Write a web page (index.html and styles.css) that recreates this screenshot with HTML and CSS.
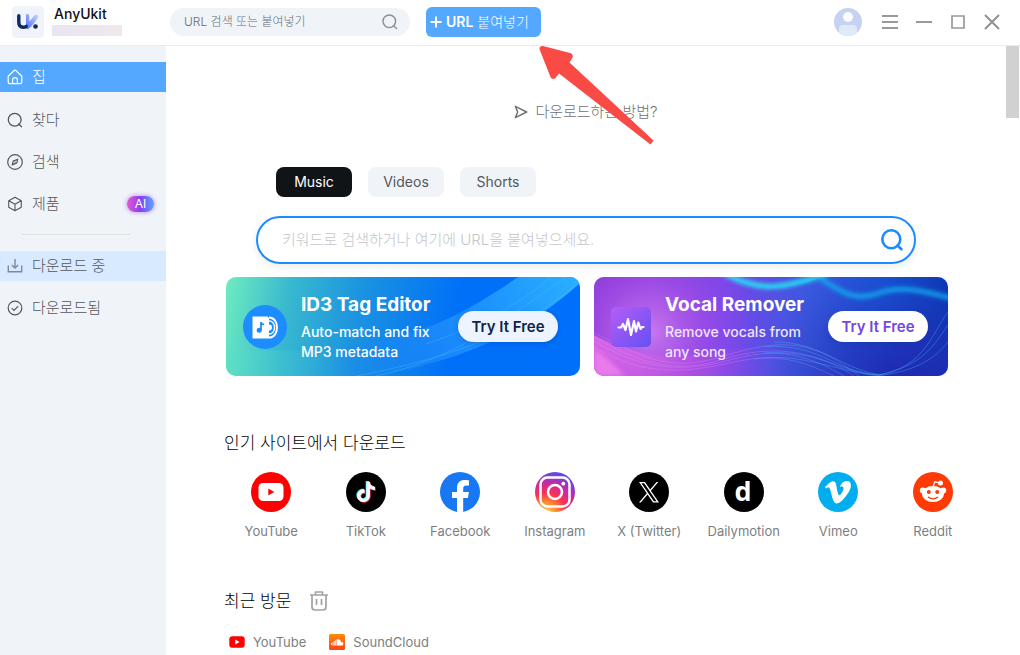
FILE: index.html
```html
<!DOCTYPE html>
<html lang="ko">
<head>
<meta charset="utf-8">
<meta name="viewport" content="width=device-width, initial-scale=1">
<title>AnyUkit</title>
<link rel="stylesheet" href="styles.css">
</head>
<body>
<header class="topbar">
  <div class="brand">
    <svg class="brand-logo" viewBox="0 0 32 32" aria-hidden="true">
      <defs><linearGradient id="lg" x1="0" y1="1" x2="1" y2="0"><stop offset="0" stop-color="#5a6cf8"/><stop offset=".5" stop-color="#8da2fb"/><stop offset="1" stop-color="#cbdcff"/></linearGradient></defs>
      <rect width="32" height="32" rx="4" fill="#f0f4fa"/>
      <path d="M14 8.500c1.500-1 3.400 0 3.400 1.500v5.500l5.200-6.200c1.800-2 4.800.2 3.300 2.500-2.500 4-5.500 8.200-9.400 11-1.200.8-2.500.2-2.500-1.200z" fill="url(#lg)"/>
      <path d="M6.800 9.800v6.500c0 3.200 1.700 5 4.500 5 1.200 0 2.100-.3 3-.9" stroke="#0d2c5e" stroke-width="3.400" fill="none" stroke-linecap="round"/>
      <circle cx="23.500" cy="20.500" r="2.300" fill="#0d2c5e"/>
    </svg>
    <div class="brand-text">
      <span class="brand-name">AnyUkit</span>
      <span class="brand-account"></span>
    </div>
  </div>
  <form class="quick-search">
    <input type="text" aria-label="URL 검색" placeholder="URL 검색 또는 붙여넣기">
    <button type="button" class="plain" aria-label="검색">
      <svg width="16" height="16" viewBox="0 0 16 16" fill="none" stroke="#8b8e92" stroke-width="1.400"><circle cx="7.300" cy="7.300" r="6.300"/><path d="M11.600 11.800l3 2.700" stroke-linecap="round"/></svg>
    </button>
  </form>
  <button type="button" class="paste-btn">
    <svg width="12" height="12" viewBox="0 0 12 12" stroke="#fff" stroke-width="2"><path d="M6 .5v11M.5 6h11"/></svg>
    <span><b>URL</b> 붙여넣기</span>
  </button>
  <div class="window-tools">
    <button type="button" class="plain avatar" aria-label="계정">
      <svg width="28" height="28" viewBox="0 0 28 28"><circle cx="14" cy="14" r="14" fill="#c6d3f0"/><circle cx="14" cy="9" r="5" fill="#fafcff"/><path d="M5 24.700V21c0-2.500 1.500-4 4-4h10c2.500 0 4 1.500 4 4v3.700A14 14 0 0 1 5 24.700z" fill="#e0e9f8"/></svg>
    </button>
    <button type="button" class="plain" aria-label="메뉴"><svg width="18" height="18" viewBox="0 0 18 18" stroke="#999" stroke-width="1.800"><path d="M1 3h16M1 9h16M1 15h16"/></svg></button>
    <button type="button" class="plain" aria-label="최소화"><svg width="18" height="18" viewBox="0 0 18 18" stroke="#999" stroke-width="2"><path d="M1 9h16"/></svg></button>
    <button type="button" class="plain" aria-label="최대화"><svg width="18" height="18" viewBox="0 0 18 18" fill="none" stroke="#999" stroke-width="1.700"><path d="M3 3h12v12H3z"/></svg></button>
    <button type="button" class="plain" aria-label="닫기"><svg width="18" height="18" viewBox="0 0 18 18" stroke="#8f8f8f" stroke-width="1.900"><path d="M2 2l14 14M16 2L2 16"/></svg></button>
  </div>
</header>

<div class="shell">
  <nav class="sidebar">
    <a href="#home" class="nav-item active">
      <svg width="16" height="16" viewBox="0 0 16 16" fill="none" stroke="currentColor" stroke-width="1.200" stroke-linejoin="round"><path d="M1.200 7.200L6.900 1.700a1.600 1.600 0 0 1 2.200 0l5.700 5.500V13a1.600 1.600 0 0 1-1.600 1.600H2.800A1.600 1.600 0 0 1 1.200 13z"/><path d="M5.600 14.500V11a2.400 2.400 0 0 1 4.800 0v3.500"/></svg>
      <span>집</span>
    </a>
    <a href="#find" class="nav-item">
      <svg width="16" height="16" viewBox="0 0 16 16" fill="none" stroke="currentColor" stroke-width="1.300"><circle cx="7.700" cy="7.700" r="6.400"/><path d="M11.700 12l2.800 2.700" stroke-linecap="round"/></svg>
      <span>찾다</span>
    </a>
    <a href="#search" class="nav-item">
      <svg width="16" height="16" viewBox="0 0 16 16" fill="none" stroke="currentColor" stroke-width="1.200"><circle cx="8" cy="8" r="7.300"/><path d="M10.800 5.200l-1 3.700-4.600 2 1-3.800z" stroke-linejoin="round"/><path d="M8 8h.1" stroke-linecap="round"/></svg>
      <span>검색</span>
    </a>
    <a href="#products" class="nav-item">
      <svg width="16" height="16" viewBox="0 0 16 16" fill="none" stroke="currentColor" stroke-width="1.100" stroke-linejoin="round"><path d="M8 1.200l6.300 3.500v6.600L8 14.800l-6.300-3.500V4.700zM1.900 4.800L8 8.200l6.100-3.400M8 8.200v6.400"/></svg>
      <span>제품</span>
      <span class="ai-badge">AI</span>
    </a>
    <hr class="nav-rule">
    <a href="#downloading" class="nav-item current">
      <svg width="16" height="16" viewBox="0 0 16 16" fill="none" stroke="#808995" stroke-width="1.400"><path d="M8 1v8.500M4.800 7L8 10l3.200-3M1.300 7.500v6.300h13.400V7.500"/></svg>
      <span>다운로드 중</span>
    </a>
    <a href="#downloaded" class="nav-item">
      <svg width="16" height="16" viewBox="0 0 16 16" fill="none" stroke="currentColor" stroke-width="1.200"><circle cx="8" cy="8" r="6.800"/><path d="M4.800 8.200l2.200 2.200 4.200-4.300"/></svg>
      <span>다운로드됨</span>
    </a>
  </nav>

  <main class="content">
    <a href="#how" class="howto">
      <svg width="14" height="14" viewBox="0 0 14 14" fill="none" stroke="#717171" stroke-width="1.500" stroke-linejoin="round"><path d="M1.300 1.300l11.400 5.700-11.400 5.700L3.700 7z"/></svg>
      <span>다운로드하는 방법?</span>
    </a>

    <section class="finder">
      <div class="tabs">
        <button type="button" class="tab selected">Music</button>
        <button type="button" class="tab">Videos</button>
        <button type="button" class="tab">Shorts</button>
      </div>
      <form class="main-search">
        <input type="text" aria-label="키워드 또는 URL" placeholder="키워드로 검색하거나 여기에 URL을 붙여넣으세요.">
        <button type="button" class="plain" aria-label="검색">
          <svg width="24" height="24" viewBox="0 0 24 24" fill="none" stroke="#1b8cff" stroke-width="2.600"><circle cx="11.300" cy="11.300" r="9"/><path d="M17.500 17.500l4 3.800" stroke-linecap="round"/></svg>
        </button>
      </form>
    </section>

    <section class="banners">
      <article class="banner tag">
        <svg class="banner-art" viewBox="0 0 354 99" preserveAspectRatio="none" aria-hidden="true">
          <defs>
            <linearGradient id="b1" x1="0" y1="0" x2="354" y2="60" gradientUnits="userSpaceOnUse"><stop offset="0" stop-color="#6fecc0"/><stop offset=".18" stop-color="#38b9cf"/><stop offset=".38" stop-color="#1b93e0"/><stop offset=".65" stop-color="#0070f8"/><stop offset="1" stop-color="#0070fb"/></linearGradient>
            <linearGradient id="b1w" x1="60" y1="99" x2="354" y2="0" gradientUnits="userSpaceOnUse"><stop offset=".12" stop-color="#1c80f4" stop-opacity="0"/><stop offset=".5" stop-color="#1f8dfc" stop-opacity=".75"/><stop offset="1" stop-color="#29b1ff"/></linearGradient>
            <linearGradient id="b1l" x1="0" y1="0" x2="1" y2="0"><stop offset="0" stop-color="#5be0c4" stop-opacity=".6"/><stop offset="1" stop-color="#35b4e0" stop-opacity="0"/></linearGradient>
          </defs>
          <rect width="354" height="99" fill="url(#b1)"/>
          <path d="M0 71c40 5 80 1 130 1v27H0z" fill="url(#b1l)"/>
          <path d="M60 76C180 68 225 46 292 0h62v6C300 55 240 82 150 99H40z" fill="url(#b1w)"/>
          <g fill="none" stroke="#6cc5ff" stroke-width=".8" opacity=".35"><path d="M130 99C240 78 300 50 354 5M150 99C230 82 280 42 340 0M200 67C250 50 290 30 325 0"/></g>
        </svg>
        <svg class="banner-icon" width="44" height="44" viewBox="0 0 44 44" aria-hidden="true">
          <circle cx="22" cy="22" r="22" fill="#1c8cff"/>
          <path d="M26 12.500c5 0 8 4.500 8 10s-3 10-8 10" fill="none" stroke="#fff" stroke-width="2"/>
          <path d="M26 16c3.500 0 5.500 3 5.500 6.500S29.500 29 26 29" fill="none" stroke="#fff" stroke-width="1.500"/>
          <path d="M26 19.500a3 3 0 0 1 0 6" fill="#fff"/>
          <path d="M9.500 11.500h15l1.500 1.500v20.500H9.500z" fill="#fff"/>
          <path d="M18 17v8.500M18 17.500c.5 1.500 2 2 3 1.700" stroke="#1c8cff" stroke-width="1.800" fill="none"/><circle cx="16.200" cy="25.300" r="2.500" fill="#1c8cff"/>
        </svg>
        <div class="banner-copy"><h2>ID3 Tag Editor</h2><p>Auto-match and fix<br>MP3 metadata</p></div>
        <button type="button" class="try">Try It Free</button>
      </article>
      <article class="banner vocal">
        <svg class="banner-art" viewBox="0 0 354 99" preserveAspectRatio="none" aria-hidden="true">
          <defs>
            <linearGradient id="b2" x1="0" y1="0" x2="354" y2="30" gradientUnits="userSpaceOnUse"><stop offset="0" stop-color="#8635d0"/><stop offset=".38" stop-color="#7546e8"/><stop offset=".6" stop-color="#3c58e0"/><stop offset=".82" stop-color="#1557d8"/><stop offset="1" stop-color="#0b38b4"/></linearGradient>
            <radialGradient id="b2p" cx="55" cy="55" r="110" gradientUnits="userSpaceOnUse"><stop offset="0" stop-color="#ca79ee"/><stop offset=".5" stop-color="#a84fe8" stop-opacity=".65"/><stop offset="1" stop-color="#8748ee" stop-opacity="0"/></radialGradient>
            <radialGradient id="b2d" cx="300" cy="110" r="130" gradientUnits="userSpaceOnUse"><stop offset="0" stop-color="#211ea8" stop-opacity=".85"/><stop offset=".4" stop-color="#2528b0" stop-opacity=".6"/><stop offset="1" stop-color="#2430b0" stop-opacity="0"/></radialGradient>
            <linearGradient id="b2m" x1="0" y1="0" x2="1" y2="0"><stop offset="0" stop-color="#ee70e8"/><stop offset=".5" stop-color="#c052df" stop-opacity=".7"/><stop offset=".9" stop-color="#7a45df" stop-opacity="0"/></linearGradient>
            <filter id="soft" x="-10%" y="-60%" width="120%" height="220%"><feGaussianBlur stdDeviation="2.200"/></filter>
          </defs>
          <rect width="354" height="99" fill="url(#b2)"/>
          <rect width="354" height="99" fill="url(#b2d)"/>
          <rect width="200" height="99" fill="url(#b2p)"/>
          <path d="M0 58C40 80 85 86 150 70L210 99H0z" fill="url(#b2m)" opacity=".7"/>
          <path d="M0 72c12 8 22 16 30 27H0z" fill="#f585ee" opacity=".7" filter="url(#soft)"/>
          <g filter="url(#soft)" fill="none"><path d="M128-5c35 20 60 18 105 1" stroke="#25e4f4" stroke-width="5"/><path d="M225 0c25 18 38 24 60 16s45-2 75 6" stroke="#12adf0" stroke-width="5" opacity=".85"/></g>
          <path d="M130-2c35 16 60 16 98 1" fill="none" stroke="#24c9f4" stroke-width="1.200" opacity=".6"/>
          <g fill="none" stroke="#e2a3ff" stroke-width=".7" opacity=".35"><path d="M0 56c45 20 70 42 130 23s90-15 135 20M0 60c45 26 80 38 130 22s95-7 130 17M0 64c50 30 90 32 140 18s80 0 110 17M0 70c50 30 90 26 140 15s75 3 100 14"/></g>
          <g fill="none" stroke="#4cadff" stroke-width=".8" opacity=".5"><path d="M170 70c55-5 70 25 115 28 45-8 52-40 69-63M170 76c55-4 75 20 115 22 45-10 55-30 69-50M180 65c50 0 70 30 110 33 40-6 55-22 64-33M160 82c50-8 90 16 130 17"/></g>
        </svg>
        <svg class="banner-icon" width="40" height="40" viewBox="0 0 40 40" aria-hidden="true">
          <defs><linearGradient id="vi" x1="0" y1="0" x2="1" y2="1"><stop offset="0" stop-color="#b45df8"/><stop offset="1" stop-color="#6750f2"/></linearGradient></defs>
          <rect width="40" height="40" rx="5" fill="url(#vi)"/>
          <path d="M7.500 20.500h2.500l2-3.500 2.500 6 2.500-11 3 16L23 14l2 10.500 2.300-9L29.500 22l1.500-2h1.500" fill="none" stroke="#fff" stroke-width="2.200" stroke-linejoin="round" stroke-linecap="round"/>
        </svg>
        <div class="banner-copy"><h2>Vocal Remover</h2><p>Remove vocals from<br>any song</p></div>
        <button type="button" class="try">Try It Free</button>
      </article>
    </section>

    <section class="sites">
      <h2 class="section-title">인기 사이트에서 다운로드</h2>
      <div class="site-grid">
        <a href="#youtube" class="site">
          <svg viewBox="0 0 40 40"><circle cx="20" cy="20" r="20" fill="#f00"/><rect x="7.500" y="11" width="25" height="18" rx="4.500" fill="#fff"/><path d="M17.300 16.500v7l6-3.500z" fill="#f00"/></svg>YouTube</a>
        <a href="#tiktok" class="site">
          <svg viewBox="0 0 40 40"><defs><path id="tt" d="M12.525.02c1.310-.02 2.610-.01 3.910-.02.08 1.530.63 3.090 1.750 4.170 1.120 1.110 2.700 1.620 4.240 1.790v4.030c-1.440-.05-2.890-.35-4.200-.97-.57-.26-1.100-.59-1.620-.93-.01 2.920.01 5.840-.02 8.750-.08 1.400-.54 2.790-1.350 3.940-1.310 1.920-3.580 3.170-5.910 3.210-1.430.08-2.860-.31-4.080-1.030-2.020-1.190-3.440-3.370-3.650-5.710-.02-.5-.03-1-.01-1.490.18-1.900 1.120-3.720 2.580-4.960 1.660-1.440 3.980-2.130 6.150-1.720.02 1.480-.04 2.960-.04 4.440-.99-.32-2.150-.23-3.020.37-.63.41-1.110 1.040-1.360 1.750-.21.51-.15 1.070-.14 1.610.24 1.640 1.820 3.020 3.500 2.870 1.120-.01 2.190-.66 2.770-1.610.19-.33.4-.67.41-1.060.1-1.790.06-3.570.07-5.360.01-4.030-.01-8.050.02-12.070z"/></defs><circle cx="20" cy="20" r="20"/><g transform="translate(9.800 9.700) scale(.85)"><use href="#tt" x="-.9" y="-.7" fill="#25f4ee"/><use href="#tt" x=".9" y=".7" fill="#fe2c55"/><use href="#tt" fill="#fff"/></g></svg>TikTok</a>
        <a href="#facebook" class="site">
          <svg viewBox="0 0 40 40"><circle cx="20" cy="20" r="20" fill="#1877f2"/><path d="M17 39.700V26h-5v-6h5v-4c0-5.500 3.100-8 7.700-8 2.200 0 4.300.4 4.300.4v5h-2.400c-2.500 0-3.400 1.300-3.400 3V20h5.700l-.9 6h-4.800v13.700a20 20 0 0 1-6.200 0z" fill="#fff"/></svg>Facebook</a>
        <a href="#instagram" class="site">
          <svg viewBox="0 0 40 40"><defs><radialGradient id="ig" cx="11" cy="41" r="42" gradientUnits="userSpaceOnUse"><stop offset="0" stop-color="#ffdc6b"/><stop offset=".25" stop-color="#fe8c2c"/><stop offset=".48" stop-color="#fc2f55"/><stop offset=".72" stop-color="#c52ba5"/><stop offset="1" stop-color="#5a49ea"/></radialGradient></defs><circle cx="20" cy="20" r="20" fill="url(#ig)"/><g fill="none" stroke="#fff" stroke-width="2.500"><rect x="5.500" y="5.500" width="29" height="29" rx="7"/><circle cx="20" cy="20" r="7"/></g><circle cx="28.300" cy="11.700" r="1.900" fill="#fff"/></svg>Instagram</a>
        <a href="#x" class="site">
          <svg viewBox="0 0 40 40"><circle cx="20" cy="20" r="20"/><path transform="translate(9.800 10) scale(.85)" fill="#fff" d="M14.234 10.162 22.977 0h-2.072l-7.591 8.824L7.251 0H.258l9.168 13.343L.258 24H2.330l8.016-9.318L16.749 24h6.993zm-2.837 3.299-.929-1.329L3.076 1.560h3.182l5.965 8.532.929 1.329 7.754 11.090h-3.182z"/></svg>X (Twitter)</a>
        <a href="#dailymotion" class="site">
          <svg viewBox="0 0 40 40"><circle cx="20" cy="20" r="20"/><text x="19" y="29" class="dm" text-anchor="middle">d</text></svg>Dailymotion</a>
        <a href="#vimeo" class="site">
          <svg viewBox="0 0 40 40"><circle cx="20" cy="20" r="20" fill="#00adef"/><path transform="translate(7 7.200) scale(1.080)" fill="#fff" d="M23.977 6.417c-.105 2.338-1.739 5.543-4.894 9.609-3.268 4.247-6.026 6.370-8.290 6.370-1.409 0-2.578-1.294-3.553-3.881l-1.918-7.114c-.719-2.584-1.488-3.878-2.312-3.878-.179 0-.806.378-1.881 1.132l-1.129-1.457a315.060 315.060 0 0 0 3.501-3.128c1.579-1.368 2.765-2.085 3.554-2.159 1.867-.18 3.016 1.100 3.447 3.838.465 2.953.789 4.789.971 5.507.539 2.450 1.131 3.674 1.776 3.674.502 0 1.256-.796 2.265-2.385 1.004-1.589 1.540-2.797 1.612-3.628.144-1.371-.395-2.061-1.614-2.061-.574 0-1.167.121-1.777.391 1.186-3.868 3.434-5.757 6.762-5.637 2.473.06 3.628 1.664 3.493 4.797z"/></svg>Vimeo</a>
        <a href="#reddit" class="site">
          <svg viewBox="0 0 40 40"><circle cx="20" cy="20" r="20" fill="#ff3a05"/><g fill="#fff"><ellipse cx="20" cy="22" rx="11" ry="8"/><circle cx="9.800" cy="18.500" r="3"/><circle cx="30.200" cy="18.500" r="3"/><circle cx="27.500" cy="11" r="2.500"/></g><path d="M20 15l1.800-5.200 5 1.200" fill="none" stroke="#fff" stroke-width="1.200"/><circle cx="15.800" cy="20" r="2" fill="#ff3a05"/><circle cx="24.200" cy="20" r="2" fill="#ff3a05"/><path d="M15.500 25.200c2.500 2.200 6.500 2.200 9 0" fill="none" stroke="#ff3a05" stroke-width="1.400" stroke-linecap="round"/></svg>Reddit</a>
      </div>
    </section>

    <section class="recent">
      <div class="recent-head">
        <h2 class="section-title">최근 방문</h2>
        <button type="button" class="plain" aria-label="기록 삭제">
          <svg width="20" height="20" viewBox="0 0 20 20" fill="none" stroke="#a2a2a2" stroke-width="1.700" stroke-linejoin="round"><path d="M1 4h18M6.500 3.800V1h7v2.800M3 4.500V16a3 3 0 0 0 3 3h8a3 3 0 0 0 3-3V4.500M7.500 8v6M12.500 8v6"/></svg>
        </button>
      </div>
      <div class="recent-list">
        <a href="#recent-youtube" class="recent-item"><svg width="16" height="16" viewBox="0 0 16 16"><rect x=".3" y="2.300" width="15.400" height="11.400" rx="3" fill="#f00"/><path d="M6.300 5.500v5L10.600 8z" fill="#fff"/></svg>YouTube</a>
        <a href="#recent-soundcloud" class="recent-item"><svg width="16" height="16" viewBox="0 0 16 16"><defs><linearGradient id="sc" x1="0" y1="0" x2="0" y2="1"><stop offset="0" stop-color="#ff8a0d"/><stop offset="1" stop-color="#ff4313"/></linearGradient></defs><rect width="16" height="16" rx="1.500" fill="url(#sc)"/><path d="M7.500 11.500V5.600c2.200-1 4.200.2 4.500 2.400 3-.4 3 3.500.6 3.500z" fill="#fff"/><path d="M2.500 9v2M4 8v3.500M5.300 7v4.500M6.600 6.200v5.300" stroke="#fff" stroke-width=".9"/></svg>SoundCloud</a>
      </div>
    </section>
  </main>
  <div class="scroll-track" aria-hidden="true"><div class="scroll-thumb"></div></div>
</div>

<svg class="pointer" width="116" height="100" viewBox="0 0 116 100" aria-hidden="true"><path d="M4 1l27 7c3 .8 3.300 3.500 2 5.500L30.500 17.500 114.500 95.500 111.500 99.500 20 28.500 17 32.500c-1.500 2-4.500 1.800-5.500-.5L.8 5C-.2 2.500 1.500.4 4 1z" fill="#f94a46"/></svg>
</body>
</html>
```
FILE: styles.css
```css
* { box-sizing: border-box; }

body {
  margin: 0;
  height: 100vh;
  display: flex;
  flex-direction: column;
  overflow: hidden;
  background: #fff;
  color: #111;
  font: 14px/20px Inter, "Noto Sans CJK KR", sans-serif;
}

h2, p { margin: 0; }
a { color: inherit; text-decoration: none; }
svg { display: block; flex: none; }
button, input { font: inherit; color: inherit; }
button { border: 0; padding: 0; cursor: pointer; }
input { border: 0; outline: 0; padding: 0; background: none; flex: 1; min-width: 0; }
.plain { background: none; }

.topbar {
  flex: none;
  display: flex;
  align-items: center;
  height: 46px;
  padding: 0 19px 2px 12px;
  border-bottom: 1px solid #e9ebec;
}
.brand { display: flex; gap: 8px; width: 158px; }
.brand-logo { width: 32px; height: 32px; }
.brand-text { display: flex; flex-direction: column; }
.brand-name { padding-left: 2px; line-height: 16px; font-weight: 500; }
.brand-account {
  width: 70px;
  height: 11px;
  margin-top: 3px;
  background: linear-gradient(90deg, #e8e5f3, #ece7ee 50%, #f0e8eb);
}
.quick-search {
  display: flex;
  align-items: center;
  width: 240px;
  height: 28px;
  padding: 0 12px 0 14px;
  border-radius: 14px;
  background: #f0f4f9;
  font-size: 12px;
  font-weight: 300;
}
.quick-search input::placeholder { color: #686c72; opacity: 1; }
.paste-btn {
  display: flex;
  align-items: center;
  gap: 4px;
  height: 30px;
  margin-left: 16px;
  padding: 0 12px 0 4px;
  border-radius: 6px;
  background: #54a8ff;
  color: #fff;
  font-weight: 300;
  white-space: nowrap;
}
.paste-btn b { font-weight: 600; }
.window-tools { display: flex; align-items: center; gap: 16px; margin-left: auto; }
.avatar { margin-right: 3px; }

.shell { flex: 1; display: flex; min-height: 0; }
.sidebar {
  flex: none;
  display: flex;
  flex-direction: column;
  gap: 12px;
  width: 166px;
  padding-top: 16px;
  background: #f0f4f9;
}
.nav-item {
  display: flex;
  align-items: center;
  gap: 9px;
  height: 30px;
  padding: 0 12px 0 7px;
  color: #54575a;
  font-size: 15px;
  line-height: 22px;
  font-weight: 300;
}
.nav-item.active { margin-bottom: 1px; background: #54a8ff; color: #fff; }
.nav-item.current { background: #d8eaff; }
.nav-rule {
  width: 108px;
  height: 1px;
  margin: 3px 0 4px 22px;
  border: 0;
  background: #dfe1e3;
}
.ai-badge {
  margin-left: auto;
  width: 27px;
  height: 16px;
  border-radius: 8px;
  background: linear-gradient(90deg, #ea55cf, #8442f4 50%, #58a7ff);
  box-shadow: 0 0 4px 1px #c9a6f8;
  color: #fff;
  font-size: 12px;
  line-height: 16px;
  font-weight: 400;
  text-align: center;
}

.content { flex: 1; min-width: 0; padding: 56px 26px 0 58px; overflow: hidden; }
.howto {
  display: flex;
  justify-content: center;
  align-items: center;
  gap: 7px;
  margin-right: 32px;
  color: #6d7073;
  font-size: 15px;
  font-weight: 300;
}
.finder { max-width: 660px; margin: 45px 64px 0 32px; }
.tabs { display: flex; gap: 16px; padding-left: 20px; }
.tab {
  width: 76px;
  height: 30px;
  border-radius: 8px;
  background: #f0f4f9;
  color: #54575a;
}
.tab.selected { background: #101417; color: #fff; }
.main-search {
  display: flex;
  align-items: center;
  height: 48px;
  margin-top: 19px;
  padding: 0 10px 0 24px;
  border: 2px solid #1b8cff;
  border-radius: 24px;
  box-shadow: 0 3px 8px rgba(0, 0, 0, .08);
  font-size: 15px;
  font-weight: 300;
}
.main-search input::placeholder { color: #c4c6c9; opacity: 1; }

.banners {
  display: grid;
  grid-template-columns: 1fr 1fr;
  gap: 14px;
  max-width: 722px;
  margin: 13px 32px 0 2px;
}
.banner {
  position: relative;
  display: flex;
  align-items: center;
  gap: 14px;
  height: 99px;
  padding: 0 20px 0 17px;
  border-radius: 10px;
  overflow: hidden;
  color: #fff;
}
.banner.tag { padding-right: 22px; }
.banner-art { position: absolute; inset: 0; width: 100%; height: 100%; }
.banner-icon, .banner-copy, .try { position: relative; }
.banner-copy { flex: 1; white-space: nowrap; }
.banner-copy h2 { margin-bottom: 4px; font-size: 19px; line-height: 26px; font-weight: 700; }
.banner-copy p { font-size: 14px; line-height: 20px; font-weight: 500; }
.try {
  width: 100px;
  height: 31px;
  border-radius: 16px;
  background: #edf4ff;
  color: #10234b;
  font-size: 15px;
  font-weight: 600;
  white-space: nowrap;
  box-shadow: 0 2px 5px rgba(0, 50, 160, .25);
}
.vocal .try { background: #fff; color: #7447e2; }
.vocal p { color: #f0e5ff; }

.sites { margin-top: 55px; }
.section-title { font-size: 17px; line-height: 24px; font-weight: 300; color: #000; }
.site-grid { display: grid; grid-template-columns: repeat(8, 1fr); margin-top: 17px; }
.site {
  display: flex;
  flex-direction: column;
  align-items: center;
  gap: 9px;
  color: #7c7f82;
  font-size: 13px;
  white-space: nowrap;
}
.site svg { width: 40px; height: 40px; }
.dm { font: 700 27px "Open Sans", sans-serif; fill: #fff; }

.recent { margin-top: 48px; }
.recent-head { display: flex; align-items: center; gap: 18px; }
.recent-list { display: flex; gap: 23px; margin-top: 19px; padding-left: 5px; }
.recent-item { display: flex; align-items: center; gap: 8px; color: #7c7f82; font-size: 13px; }

.scroll-track { flex: none; width: 14px; }
.scroll-thumb { width: 13px; height: 72px; background: #d1d1d1; }

.pointer { position: absolute; left: 539px; top: 45px; }
```
